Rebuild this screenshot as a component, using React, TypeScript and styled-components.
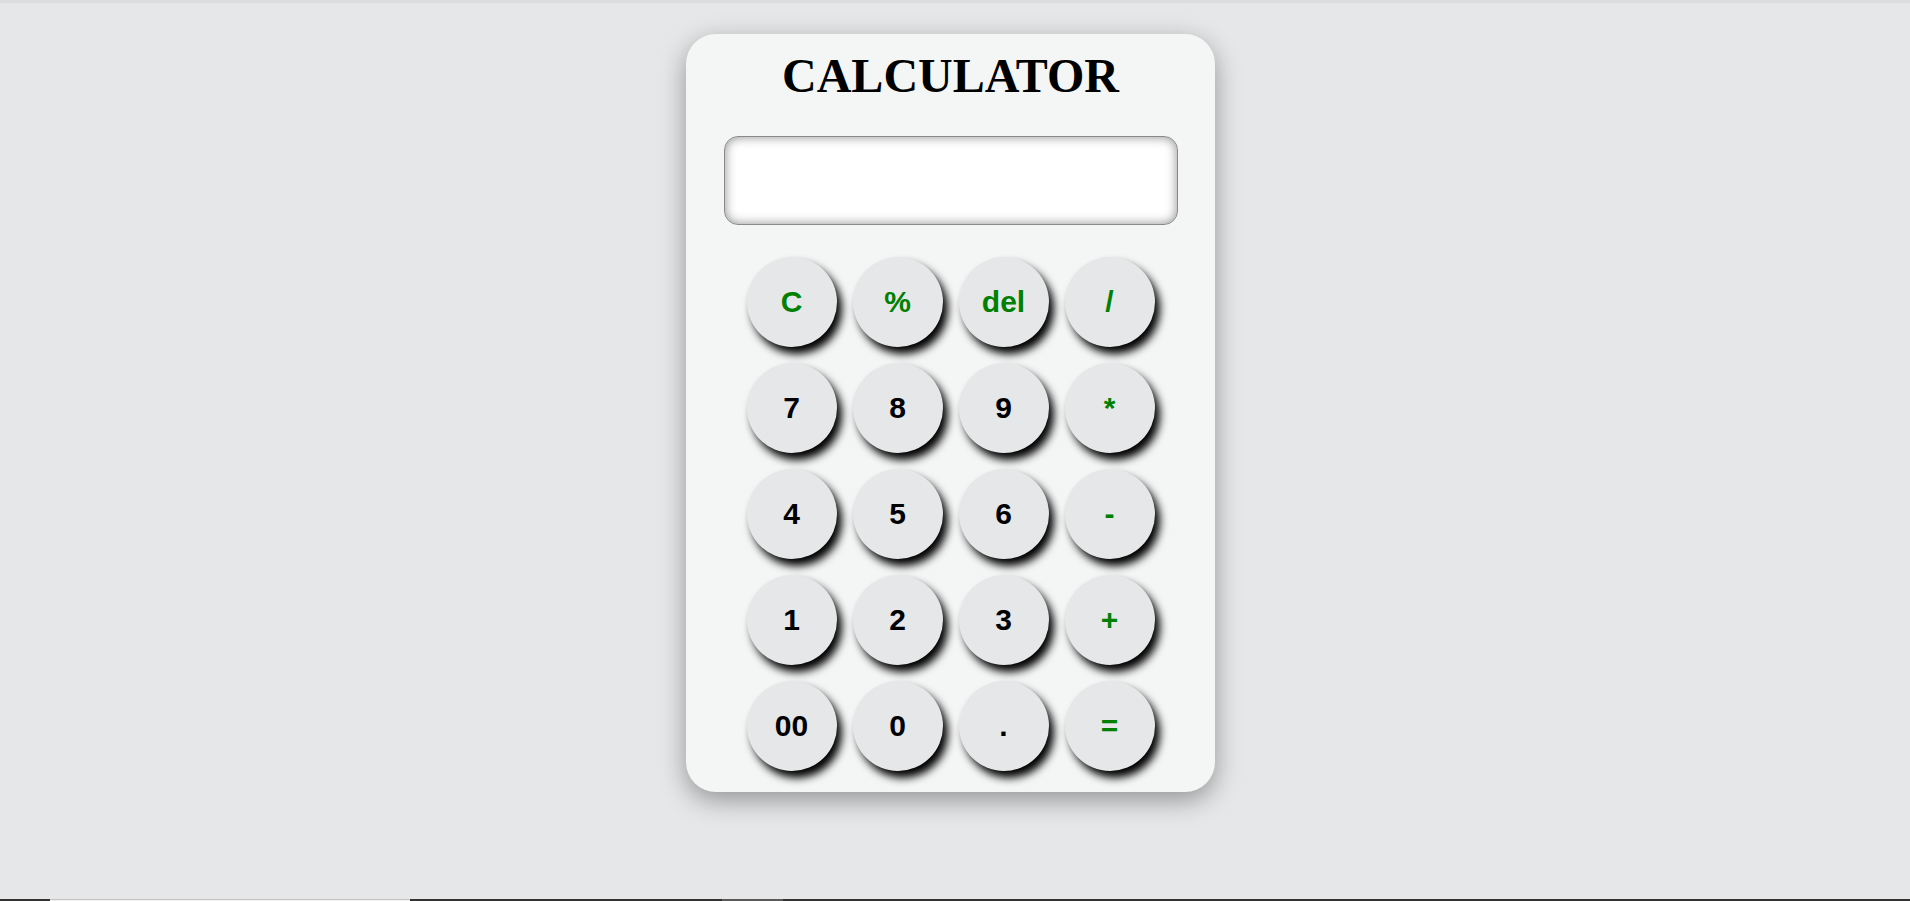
import React, { useState } from "react";
import styled, { createGlobalStyle } from "styled-components";

const GlobalStyle = createGlobalStyle`
  html, body { margin: 0; padding: 0; }
  body { background: #e6e7e9; overflow: hidden; }
  * { box-sizing: border-box; }
`;

const Page = styled.div`
  height: 100vh;
  display: flex;
  flex-direction: column;
`;

const TopLine = styled.div`
  height: 3px;
  background: #dcdddf;
  flex: none;
`;

const Main = styled.main`
  flex: 1;
  display: flex;
  justify-content: center;
  align-items: flex-start;
  padding: 31px 9px 0 0;
`;

const Card = styled.div`
  width: 529px;
  background: #f4f6f5;
  border-radius: 30px;
  box-shadow: 0 8px 26px rgba(0, 0, 0, 0.36);
  padding: 14px 0 13px;
  display: flex;
  flex-direction: column;
  align-items: center;
`;

const Title = styled.h1`
  margin: 0 0 33px;
  font-family: "Liberation Serif", "Times New Roman", serif;
  font-weight: bold;
  font-size: 48px;
  line-height: 55px;
  color: #000;
`;

const Display = styled.input`
  width: 454px;
  height: 89px;
  border: 1px solid #8a8a8a;
  border-radius: 14px;
  background: #fff;
  box-shadow: inset 0 0 11px rgba(0, 0, 0, 0.45);
  text-align: right;
  padding: 0 15px;
  font-family: "Liberation Sans", Arial, sans-serif;
  font-size: 20px;
  color: #000;
  outline: none;
  caret-color: #000;
`;

const Keypad = styled.div`
  margin-top: 24px;
  display: grid;
  grid-template-columns: repeat(4, 106px);
  grid-auto-rows: 106px;
`;

const Key = styled.button<{ $op?: boolean }>`
  width: 90px;
  height: 90px;
  margin: 8px;
  border: none;
  border-radius: 50%;
  background: #e6e7e9;
  box-shadow: 5px 7px 8px #000;
  font-family: "Liberation Sans", Arial, sans-serif;
  font-weight: bold;
  font-size: 30px;
  color: ${(p) => (p.$op ? "#008000" : "#000")};
  cursor: pointer;
  padding: 0;
`;

const BottomBar = styled.div`
  height: 2px;
  flex: none;
  display: flex;
  background: #333333;
`;

const BarSeg = styled.div<{ $w: number; $kind: "dark" | "light" | "mid" }>`
  width: ${(p) => p.$w}px;
  flex: none;
  background: ${(p) =>
    p.$kind === "light"
      ? "linear-gradient(#c4c4c4 50%, #f2f2f2 50%)"
      : p.$kind === "mid"
      ? "#5a5a5a"
      : "#333333"};
`;

const keys: { label: string; op?: boolean }[] = [
  { label: "C", op: true },
  { label: "%", op: true },
  { label: "del", op: true },
  { label: "/", op: true },
  { label: "7" },
  { label: "8" },
  { label: "9" },
  { label: "*", op: true },
  { label: "4" },
  { label: "5" },
  { label: "6" },
  { label: "-", op: true },
  { label: "1" },
  { label: "2" },
  { label: "3" },
  { label: "+", op: true },
  { label: "00" },
  { label: "0" },
  { label: "." },
  { label: "=", op: true },
];

export default function App() {
  const [value, setValue] = useState("");

  const press = (k: string) => {
    if (k === "C") return setValue("");
    if (k === "del") return setValue((v) => v.slice(0, -1));
    if (k === "=") {
      try {
        // eslint-disable-next-line no-new-func
        const r = Function(`"use strict"; return (${value || "0"})`)();
        setValue(String(r));
      } catch {
        setValue("Error");
      }
      return;
    }
    setValue((v) => v + k);
  };

  return (
    <Page>
      <GlobalStyle />
      <TopLine />
      <Main>
        <Card>
          <Title>CALCULATOR</Title>
          <Display
            autoFocus
            value={value}
            onChange={(e) => setValue(e.target.value)}
          />
          <Keypad>
            {keys.map((k) => (
              <Key key={k.label} $op={k.op} onClick={() => press(k.label)}>
                {k.label}
              </Key>
            ))}
          </Keypad>
        </Card>
      </Main>
      <BottomBar>
        <BarSeg $w={50} $kind="dark" />
        <BarSeg $w={360} $kind="light" />
        <BarSeg $w={312} $kind="dark" />
        <BarSeg $w={61} $kind="mid" />
      </BottomBar>
    </Page>
  );
}
